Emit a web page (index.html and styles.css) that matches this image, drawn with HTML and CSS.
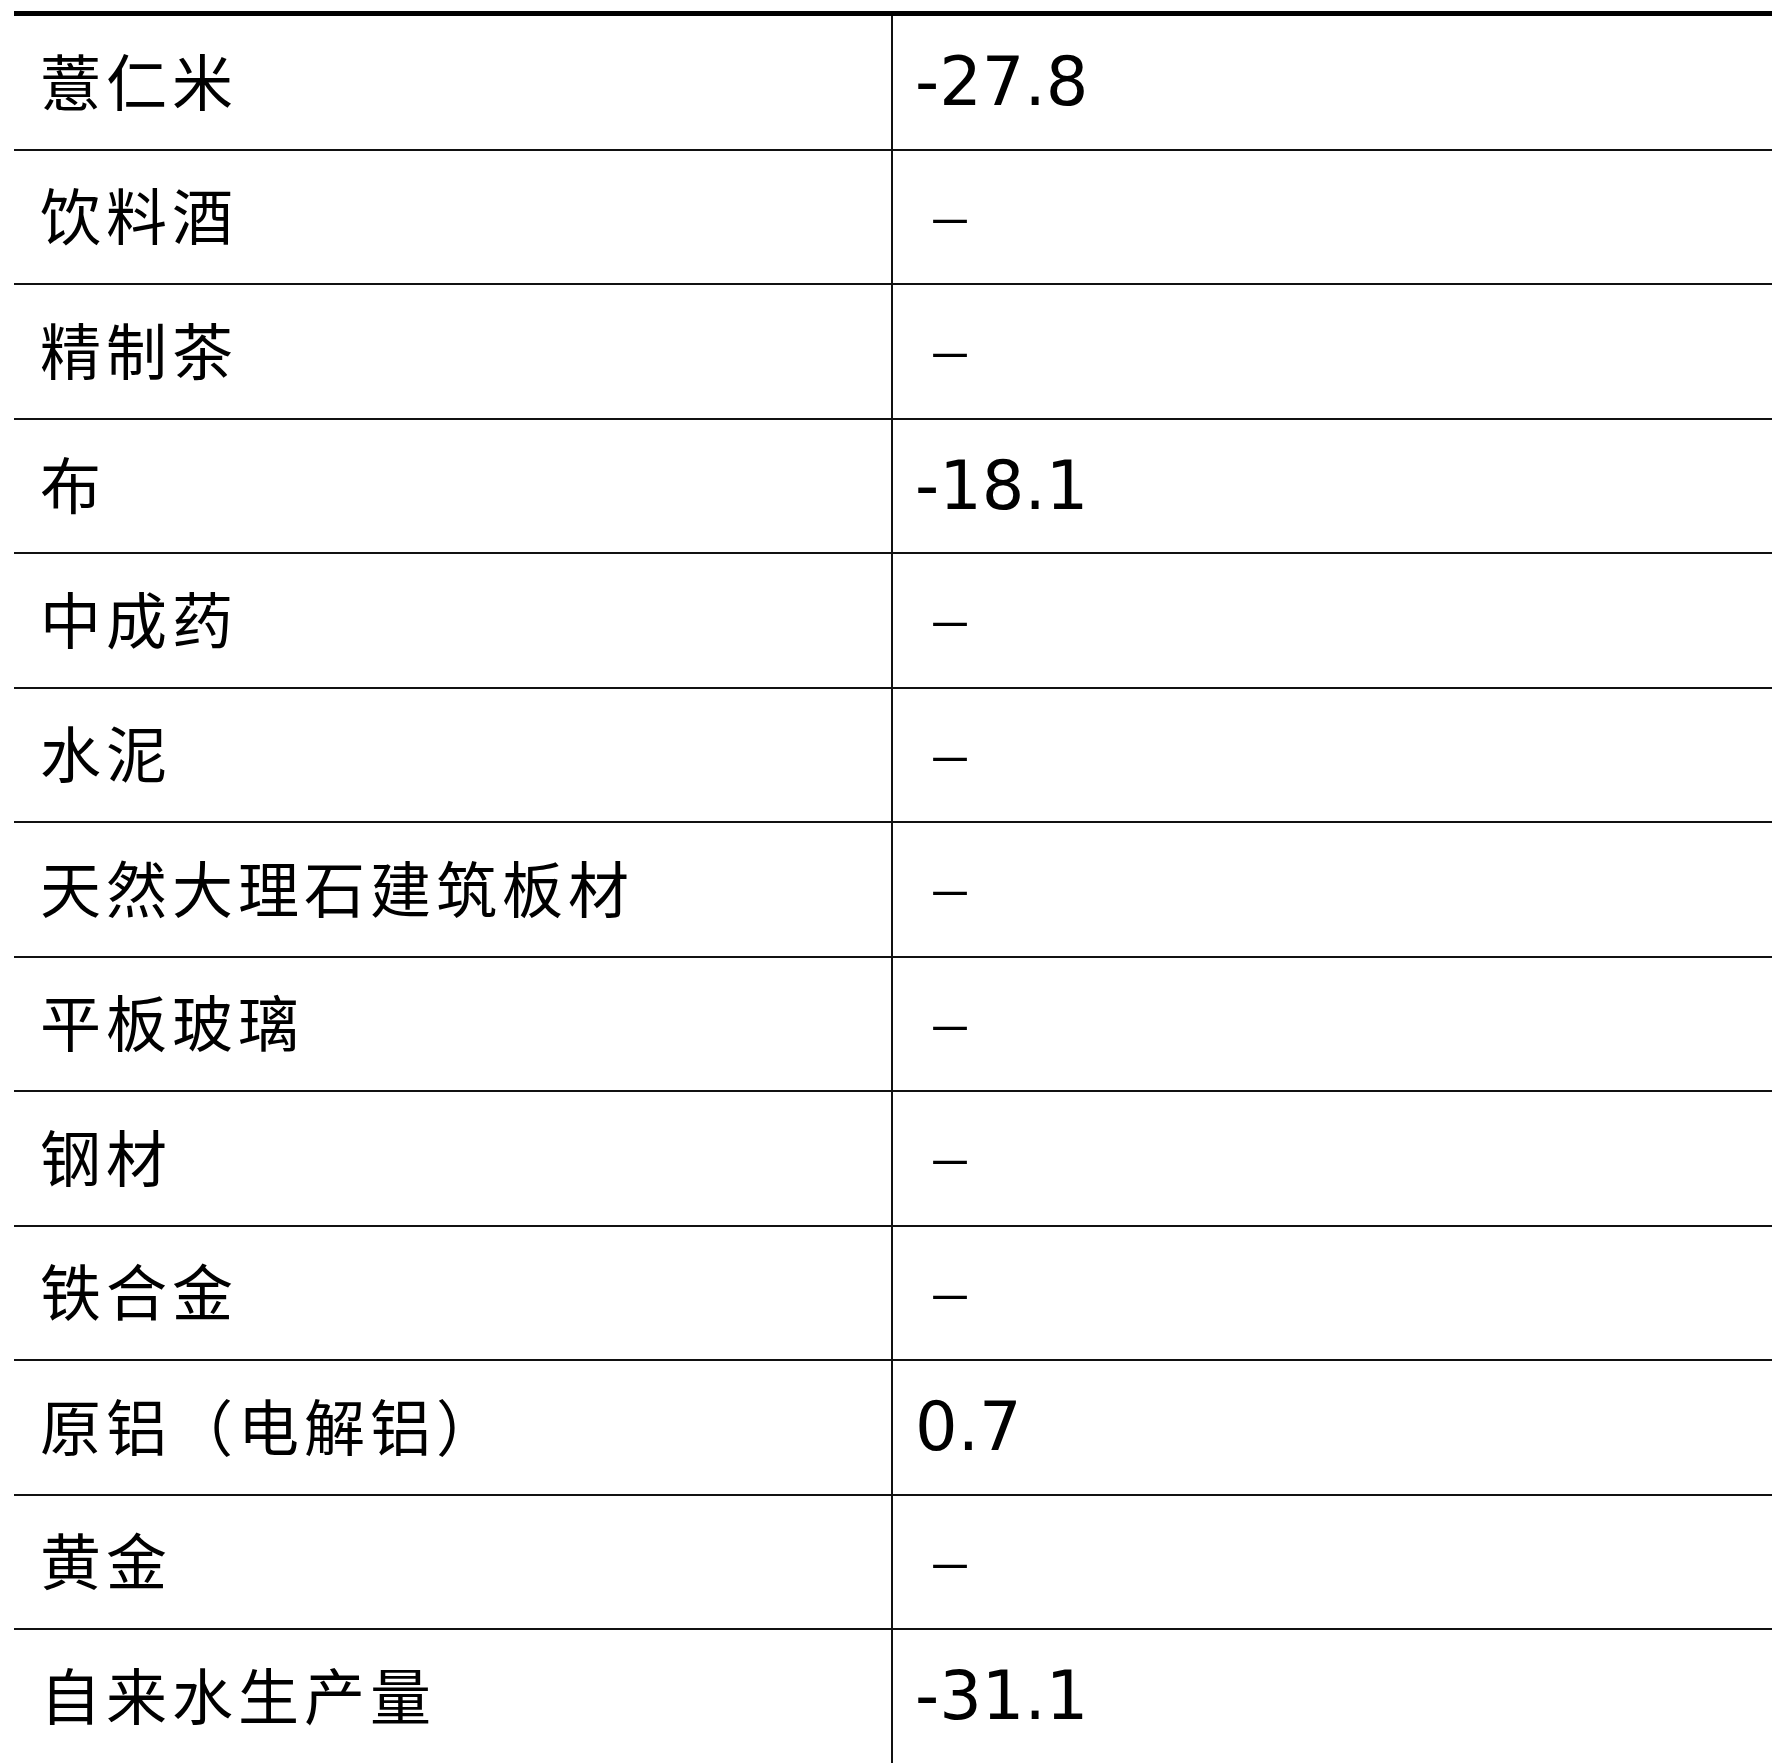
FILE: index.html
```html
<!DOCTYPE html>
<html lang="zh">
<head>
<meta charset="utf-8">
<title>产量表</title>
<link rel="stylesheet" href="styles.css">
</head>
<body>
<div class="table">
  <div class="row"><div class="name">薏仁米</div><div class="val">-27.8</div></div>
  <div class="row"><div class="name">饮料酒</div><div class="val"><span class="dash">–</span></div></div>
  <div class="row"><div class="name">精制茶</div><div class="val"><span class="dash">–</span></div></div>
  <div class="row"><div class="name">布</div><div class="val">-18.1</div></div>
  <div class="row"><div class="name">中成药</div><div class="val"><span class="dash">–</span></div></div>
  <div class="row"><div class="name">水泥</div><div class="val"><span class="dash">–</span></div></div>
  <div class="row"><div class="name">天然大理石建筑板材</div><div class="val"><span class="dash">–</span></div></div>
  <div class="row"><div class="name">平板玻璃</div><div class="val"><span class="dash">–</span></div></div>
  <div class="row"><div class="name">钢材</div><div class="val"><span class="dash">–</span></div></div>
  <div class="row"><div class="name">铁合金</div><div class="val"><span class="dash">–</span></div></div>
  <div class="row"><div class="name">原铝（电解铝）</div><div class="val">0.7</div></div>
  <div class="row"><div class="name">黄金</div><div class="val"><span class="dash">–</span></div></div>
  <div class="row"><div class="name">自来水生产量</div><div class="val">-31.1</div></div>
</div>
</body>
</html>
```

FILE: styles.css
```css
html, body {
  margin: 0;
  padding: 0;
  background: #fff;
}

body {
  padding: 11px 9px 0 14px;
  color: #000;
}

.table {
  border-top: 5px solid #000;
  width: 1758px;
}

.row {
  display: grid;
  grid-template-columns: 877px 1fr;
  height: 134.5px;
  box-sizing: border-box;
  border-bottom: 2px solid #111;
}

.name {
  display: flex;
  align-items: center;
  padding-left: 26px;
  padding-bottom: 6px;
  font-family: "Noto Sans CJK SC", sans-serif;
  font-size: 61px;
  font-weight: 400;
  letter-spacing: 5px;
  white-space: nowrap;
}

.val {
  display: flex;
  align-items: center;
  border-left: 2px solid #111;
  padding-left: 22px;
  font-family: "DejaVu Sans", "Noto Sans CJK SC", sans-serif;
  font-size: 67px;
  white-space: nowrap;
}

.dash {
  margin-left: 14px;
  padding-bottom: 4px;
  font-weight: 200;
  font-size: 84px;
}
```
